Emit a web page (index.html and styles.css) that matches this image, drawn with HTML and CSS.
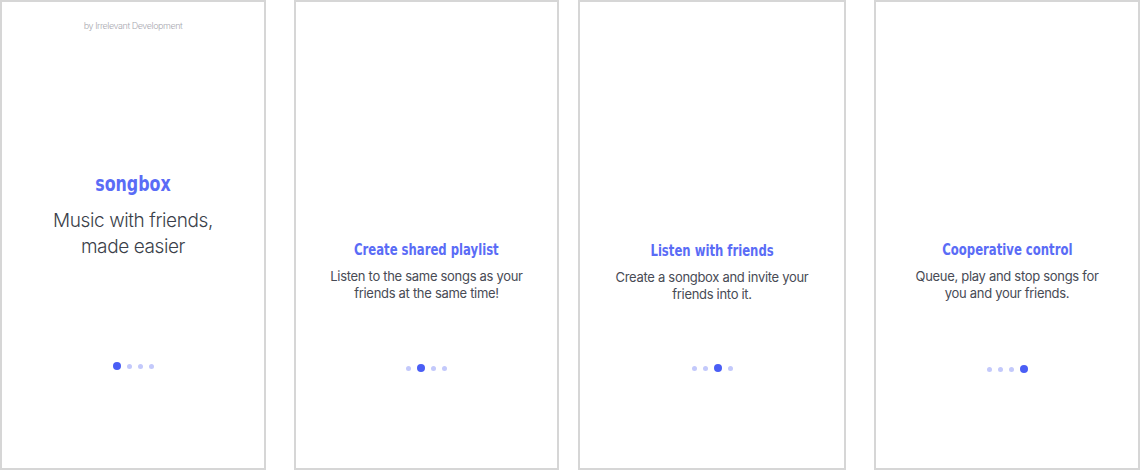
FILE: index.html
```html
<!DOCTYPE html>
<html lang="en">
<head>
<meta charset="utf-8">
<title>songbox onboarding</title>
<link rel="stylesheet" href="styles.css">
</head>
<body>
<div class="row">
  <section class="panel panel-w1 intro">
    <p class="byline">by Irrelevant Development</p>
    <h1 class="brand">songbox</h1>
    <p class="tagline">Music with friends,<br>made easier</p>
    <div class="dots dots-intro">
      <span class="dot active"></span><span class="dot"></span><span class="dot"></span><span class="dot"></span>
    </div>
  </section>
  <div class="gap-a"></div>
  <section class="panel panel-w2 step">
    <h2 class="title">Create shared playlist</h2>
    <p class="desc">Listen to the same songs as your<br>friends at the same time!</p>
    <div class="dots">
      <span class="dot"></span><span class="dot active"></span><span class="dot"></span><span class="dot"></span>
    </div>
  </section>
  <div class="gap-b"></div>
  <section class="panel panel-w3 step step-low">
    <h2 class="title">Listen with friends</h2>
    <p class="desc">Create a songbox and invite your<br>friends into it.</p>
    <div class="dots">
      <span class="dot"></span><span class="dot"></span><span class="dot active"></span><span class="dot"></span>
    </div>
  </section>
  <div class="gap-a"></div>
  <section class="panel panel-w1 step step-last">
    <h2 class="title">Cooperative control</h2>
    <p class="desc">Queue, play and stop songs for<br>you and your friends.</p>
    <div class="dots">
      <span class="dot"></span><span class="dot"></span><span class="dot"></span><span class="dot active"></span>
    </div>
  </section>
</div>
</body>
</html>
```
FILE: styles.css
```css
* { box-sizing: border-box; margin: 0; padding: 0; }
html, body { background: #ffffff; }
body { width: 1140px; height: 470px; overflow: hidden; font-family: Inter, "Noto Sans", sans-serif; }

.row { display: flex; height: 470px; }
.gap-a { width: 28px; flex: none; }
.gap-b { width: 19px; flex: none; }

.panel {
  flex: none;
  height: 470px;
  border: 2px solid #d6d6d6;
  background: #fff;
  display: flex;
  flex-direction: column;
  align-items: center;
  text-align: center;
}
.panel-w1 { width: 266px; }
.panel-w2 { width: 265px; }
.panel-w3 { width: 268px; }

.byline {
  margin-top: 18px;
  font-size: 9px;
  line-height: 12px;
  font-weight: 300;
  color: #a9a9b0;
  letter-spacing: -0.45px;
}
.brand {
  margin-top: 139px;
  font-family: "DejaVu Sans Condensed", "DejaVu Sans", sans-serif;
  font-weight: 700;
  font-size: 21px;
  line-height: 26px;
  color: #5a6cf6;
  transform: scaleX(0.84);
}
.tagline {
  margin-top: 11px;
  font-size: 19px;
  line-height: 26px;
  font-weight: 300;
  color: #3b3f4a;
  letter-spacing: -0.4px;
}

.title {
  margin-top: 238px;
  font-family: "DejaVu Sans Condensed", "DejaVu Sans", sans-serif;
  font-weight: 700;
  font-size: 16px;
  line-height: 20px;
  color: #5a6cf6;
  white-space: nowrap;
  transform: scaleX(0.81);
}
.step-low .title { margin-top: 239px; }
.desc {
  margin-top: 8px;
  font-size: 13px;
  line-height: 17px;
  color: #484b55;
  letter-spacing: -0.3px;
}

.dots {
  display: flex;
  align-items: center;
  gap: 6px;
  height: 8px;
  margin-top: 62px;
}
.dots-intro { margin-top: 102px; }
.step-low .dots { margin-top: 61px; }
.step-last .dots { margin-top: 63px; }
.dot {
  width: 5px;
  height: 5px;
  border-radius: 50%;
  background: #c3c9fb;
}
.dot.active {
  width: 8px;
  height: 8px;
  background: #4a5ef5;
}
```
